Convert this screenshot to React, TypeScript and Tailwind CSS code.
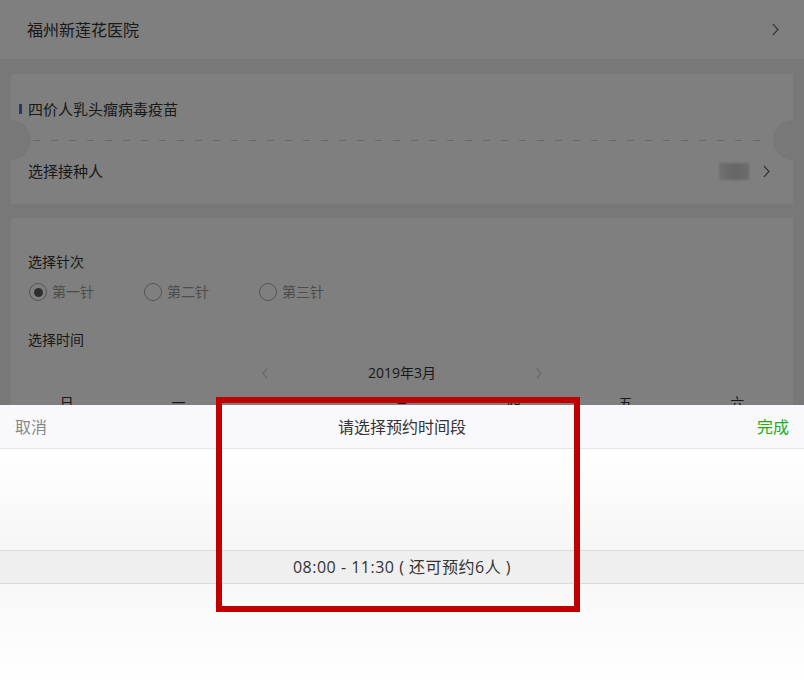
import React from "react";

function Chevron({ className = "", color = "#666" }: { className?: string; color?: string }) {
  return (
    <svg viewBox="0 0 7 13" className={className} fill="none">
      <polyline points="0.8,0.8 6,6.5 0.8,12.2" stroke={color} strokeWidth="1.2" strokeLinejoin="miter" />
    </svg>
  );
}

function Radio({ label, checked = false }: { label: string; checked?: boolean }) {
  return (
    <div className="flex w-[115px] items-center gap-[5px]">
      <span className="flex h-[18px] w-[18px] items-center justify-center rounded-full border border-[#aaa]">
        {checked && <span className="h-[9px] w-[9px] rounded-full bg-[#5f5f5f]" />}
      </span>
      <span className="text-[14px] leading-5 text-[#999]">{label}</span>
    </div>
  );
}

const weekdays = ["日", "一", "二", "三", "四", "五", "六"];

export default function App() {
  return (
    <div className="relative h-[687px] w-full overflow-hidden bg-[#f0f0f0] font-['Open_Sans','Noto_Sans_CJK_SC',sans-serif] text-[#333]">
      {/* Hospital */}
      <div className="flex h-[59px] items-center justify-between bg-white pl-[27px] pr-[25px]">
        <span className="text-[16px] leading-[22px]">福州新莲花医院</span>
        <Chevron className="h-[13px] w-[7px]" />
      </div>

      {/* Vaccine card */}
      <div className="relative mx-[11px] mt-[15px] h-[130px] bg-white">
        <div className="flex h-[66px] items-start pl-[8px] pt-[24px]">
          <span className="mt-[6px] h-[10px] w-[3px] bg-[#4a72d6]" />
          <span className="ml-[6px] text-[15px] leading-[22px]">四价人乳头瘤病毒疫苗</span>
        </div>
        <div className="mx-[22px] h-px bg-[repeating-linear-gradient(to_right,#d2d2d2_0_7px,transparent_7px_18px)]" />
        <div className="flex h-[63px] items-center justify-between pb-[3px] pl-[17px] pr-[23px]">
          <span className="text-[15px] leading-[22px]">选择接种人</span>
          <div className="flex items-center gap-[14px]">
            <span className="h-[17px] w-[30px] bg-gradient-to-r from-[#e2e2e2] via-[#cdcdcd] to-[#dadada] blur-[1px]" />
            <Chevron className="h-[13px] w-[7px]" />
          </div>
        </div>
        <span className="absolute left-[-20px] top-[46px] h-10 w-10 rounded-full bg-[#f0f0f0]" />
        <span className="absolute right-[-20px] top-[46px] h-10 w-10 rounded-full bg-[#f0f0f0]" />
      </div>

      {/* Dose & time card */}
      <div className="mx-[11px] mt-[14px] bg-white pb-6 pt-[34px]">
        <div className="pl-[17px] text-[14px] leading-5">选择针次</div>
        <div className="mt-[10px] flex pl-[18px]">
          <Radio label="第一针" checked />
          <Radio label="第二针" />
          <Radio label="第三针" />
        </div>
        <div className="mt-[28px] pl-[17px] text-[14px] leading-5">选择时间</div>
        <div className="mt-[13px] flex items-center justify-center gap-[100px]">
          <Chevron className="h-[11px] w-[6px] rotate-180" color="#c8c8c8" />
          <span className="text-[14px] leading-5">2019年3月</span>
          <Chevron className="h-[11px] w-[6px]" color="#c8c8c8" />
        </div>
        <div className="mt-[10px] grid grid-cols-7 text-center text-[14px] leading-5">
          {weekdays.map((d) => (
            <span key={d}>{d}</span>
          ))}
        </div>
        <div className="h-[200px]" />
      </div>

      {/* Mask */}
      <div className="absolute inset-0 bg-black/50" />

      {/* Time picker sheet */}
      <div className="absolute inset-x-0 bottom-0 top-[405px] flex flex-col bg-white">
        <div className="flex h-[44px] shrink-0 items-center justify-between border-b border-[#e5e5e5] bg-[#f9f8fc] px-[15px] text-[16px]">
          <span className="text-[#888]">取消</span>
          <span className="text-[#333]">请选择预约时间段</span>
          <span className="text-[#1aad19]">完成</span>
        </div>
        <div className="flex flex-1 flex-col">
          <div className="h-[101px] bg-gradient-to-b from-white to-[#f6f6f7]" />
          <div className="flex h-[34px] items-center justify-center border-y border-[#dadada] bg-[#efefef] text-[16px] tracking-[0.5px] text-[#333]">
            08:00 - 11:30 ( 还可预约6人 )
          </div>
          <div className="flex-1 bg-gradient-to-t from-white to-[#f8f8f9]" />
        </div>
      </div>

      {/* Annotation */}
      <div className="absolute left-[216px] top-[397px] h-[215px] w-[364px] border-[6px] border-[#c00000]" />
    </div>
  );
}
